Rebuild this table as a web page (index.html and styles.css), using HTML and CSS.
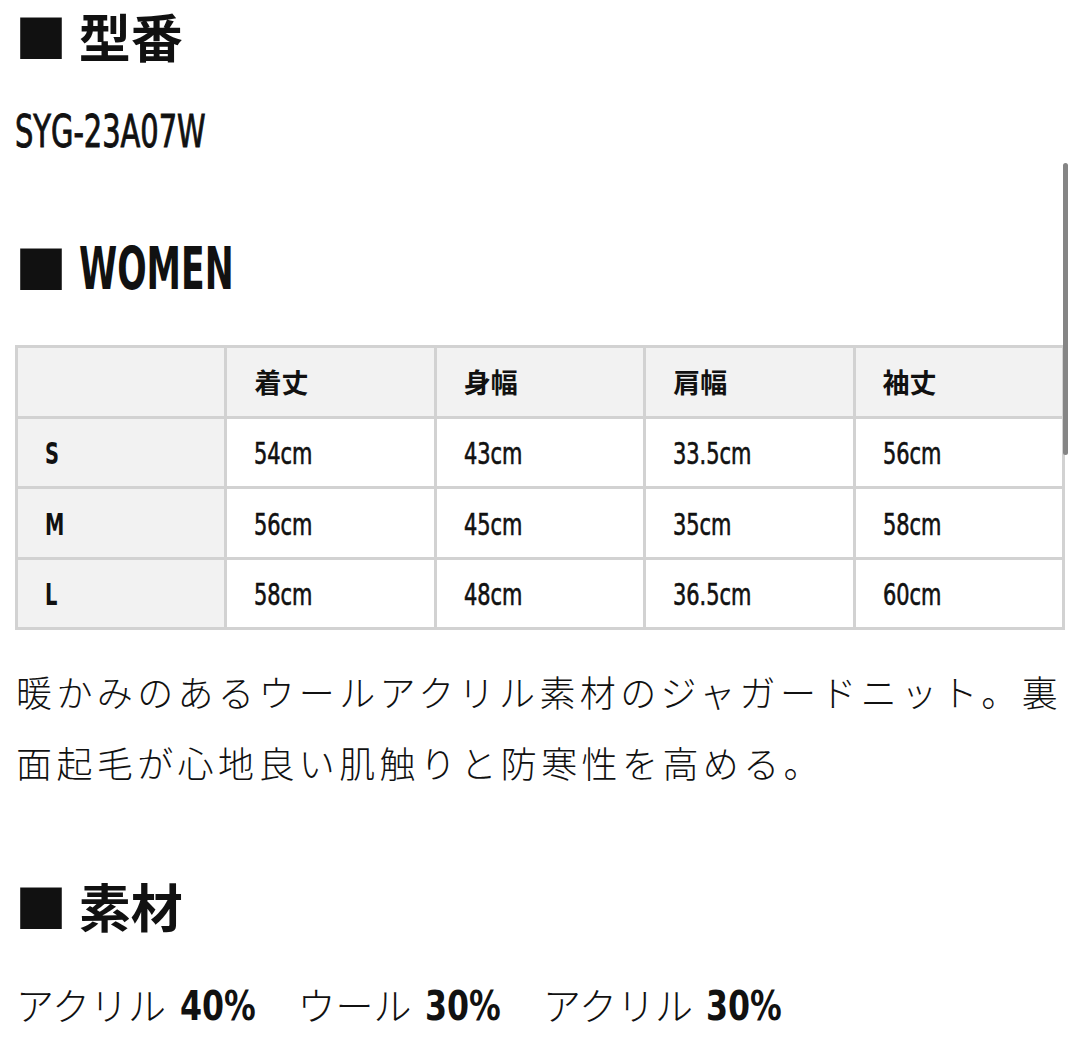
FILE: index.html
```html
<!DOCTYPE html>
<html lang="ja">
<head>
<meta charset="utf-8">
<title>SYG-23A07W</title>
<link rel="stylesheet" href="styles.css">
</head>
<body>
<div class="page">
  <h2 class="heading"><span class="mark">■</span> 型番</h2>
  <p class="model"><span class="cond cond-model">SYG-23A07W</span></p>

  <h2 class="heading heading-women"><span class="mark">■</span> <span class="cond cond-women">WOMEN</span></h2>
  <table class="size-table">
    <thead>
      <tr><th class="corner"></th><th>着丈</th><th>身幅</th><th>肩幅</th><th>袖丈</th></tr>
    </thead>
    <tbody>
      <tr><th><span class="cond cond-label">S</span></th><td><span class="cond cond-cell">54cm</span></td><td><span class="cond cond-cell">43cm</span></td><td><span class="cond cond-cell">33.5cm</span></td><td><span class="cond cond-cell">56cm</span></td></tr>
      <tr><th><span class="cond cond-label">M</span></th><td><span class="cond cond-cell">56cm</span></td><td><span class="cond cond-cell">45cm</span></td><td><span class="cond cond-cell">35cm</span></td><td><span class="cond cond-cell">58cm</span></td></tr>
      <tr><th><span class="cond cond-label">L</span></th><td><span class="cond cond-cell">58cm</span></td><td><span class="cond cond-cell">48cm</span></td><td><span class="cond cond-cell">36.5cm</span></td><td><span class="cond cond-cell">60cm</span></td></tr>
    </tbody>
  </table>

  <p class="desc">暖かみのあるウールアクリル素材のジャガードニット。裏面起毛が心地良い肌触りと防寒性を高める。</p>

  <h2 class="heading heading-material"><span class="mark">■</span> 素材</h2>
  <p class="material"><span class="kana">アクリル</span> <span class="num"><span class="cond cond-num">40%</span></span>　<span class="kana">ウール</span> <span class="num"><span class="cond cond-num">30%</span></span>　<span class="kana">アクリル</span> <span class="num"><span class="cond cond-num">30%</span></span></p>
</div>
<div class="scrollbar"></div>
</body>
</html>
```

FILE: styles.css
```css
html, body {
  margin: 0;
  padding: 0;
  background: #ffffff;
}

body {
  color: #111111;
  font-family: "Noto Sans CJK JP", sans-serif;
  width: 1080px;
  height: 1039px;
  overflow: hidden;
  position: relative;
}

.page {
  padding: 4px 15px 0;
}

.cond {
  display: inline-block;
  font-family: "DejaVu Sans Condensed", "DejaVu Sans", sans-serif;
  font-stretch: condensed;
  font-weight: 400;
  white-space: nowrap;
  transform-origin: 0 50%;
}

.heading {
  margin: 0;
  font-size: 52px;
  line-height: 64px;
  height: 64px;
  font-weight: 700;
  white-space: nowrap;
}

.mark {
  font-weight: 700;
}

.model {
  margin: 32px 0 0 0;
  font-size: 40px;
  line-height: 60px;
  height: 60px;
}

.cond-model {
  font-size: 44px;
  -webkit-text-stroke: 0.9px #111111;
  transform: scaleX(0.73);
}

.heading-women {
  margin-top: 75px;
}

.cond-women {
  font-size: 58px;
  font-weight: 700;
  transform: scaleX(0.663);
}

.size-table {
  margin-top: 46px;
  width: 1050px;
  border-collapse: collapse;
  table-layout: fixed;
  border: 3px solid #d2d2d2;
}

.size-table th,
.size-table td {
  border: 3px solid #d2d2d2;
  height: 67.5px;
  padding: 0 0 0 27px;
  text-align: left;
  font-size: 28px;
  font-weight: 700;
  background: #ffffff;
  white-space: nowrap;
}

.size-table thead th {
  background: #f2f2f2;
  font-size: 27px;
}

.size-table tbody th {
  background: #f2f2f2;
}

.cond-cell {
  font-size: 30px;
  -webkit-text-stroke: 0.6px #111111;
  transform: scaleX(0.775);
}

.cond-label {
  font-size: 30px;
  font-weight: 700;
  transform: scaleX(0.72);
}

.desc {
  margin: 26px -15px 0 1px;
  font-weight: 300;
  font-size: 36px;
  letter-spacing: 4.4px;
  line-height: 71px;
}

.heading-material {
  margin-top: 76px;
}

.material {
  margin: 36px 0 0 1px;
  font-size: 38px;
  line-height: 60px;
  height: 60px;
  font-weight: 300;
  white-space: nowrap;
}

.num {
  display: inline-block;
  width: 80px;
  margin-left: 5px;
}

.cond-num {
  font-size: 40px;
  font-weight: 700;
  transform: scaleX(0.88);
}

.scrollbar {
  position: absolute;
  left: 1063px;
  top: 163px;
  width: 5px;
  height: 292px;
  border-radius: 3px;
  background: #858585;
}
```
